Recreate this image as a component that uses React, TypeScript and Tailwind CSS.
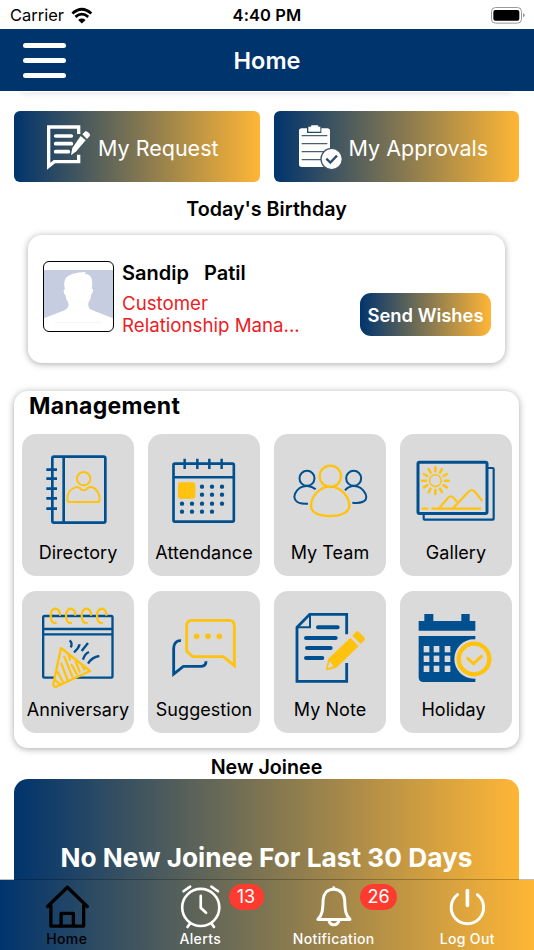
import React from 'react';

const BLUE = '#00508f';
const YELLOW = '#ffc20e';

function DirectoryIcon() {
    return (
        <svg viewBox="66 163 336 315" className="w-28 h-[105px]" fill="none" stroke={BLUE} strokeWidth="8">
            <rect x="157" y="231" width="159" height="198" rx="5" />
            <path d="M191 231V429" />
            <path d="M139 270H171M139 297H171M139 327H171M139 356H171M139 387H171" />
            <g stroke={YELLOW} strokeWidth="6">
                <circle cx="251" cy="297" r="20" />
                <path d="M226 323C210 328 201 343 202 360Q202 367 210 367H290Q299 367 299 360C299 343 290 326 275 322Q264 321 259 329Q251 334 243 329Q236 319 226 323Z" />
            </g>
        </svg>
    );
}

function AttendanceIcon() {
    const dots = [
        [606, 321], [636, 321], [666, 321],
        [606, 345], [636, 345], [666, 345],
        [546, 372], [576, 372], [606, 372], [636, 372], [666, 372],
        [546, 396], [576, 396], [606, 396], [636, 396],
    ];
    return (
        <svg viewBox="444 163 336 315" className="w-28 h-[105px]" fill="none" stroke={BLUE} strokeWidth="7.500">
            <rect x="520.500" y="252" width="181" height="174" rx="4" strokeWidth="8" />
            <path d="M520 293H702M554 237V268M592 237V268M628 237V268M665 237V268" />
            <rect x="534" y="308" width="52" height="49" rx="7" fill={YELLOW} stroke="none" />
            {dots.map(([x, y]) => (
                <circle key={`${x}-${y}`} cx={x} cy={y} r="6.500" fill={BLUE} stroke="none" />
            ))}
        </svg>
    );
}

function TeamIcon() {
    return (
        <svg viewBox="21 163 336 315" className="w-28 h-[105px]" fill="none" stroke={BLUE} strokeWidth="6">
            <circle cx="120" cy="296" r="22.500" />
            <path d="M146 329C131 316 111 316 98 325C84 335 79 350 84 359C89 369 105 373 123 372" />
            <circle cx="260" cy="296" r="22.500" />
            <path d="M234 332C247 316 268 316 281 325C296 336 301 352 296 360C290 369 275 371 256 369" />
            <g stroke={YELLOW} strokeWidth="7">
                <circle cx="190" cy="290" r="32" />
                <path d="M189 321C157 321 133 351 132 377C131 400 158 409 190 409C222 409 248 398 247 377C246 350 221 321 189 321Z" />
            </g>
        </svg>
    );
}

function GalleryIcon() {
    const rays = [0, 30, 60, 90, 120, 150, 180, 210, 240, 270, 300, 330];
    return (
        <svg viewBox="401 163 336 315" className="w-28 h-[105px]" fill="none" stroke={BLUE} strokeWidth="6.500">
            <rect x="455" y="247.500" width="207" height="154" rx="5" strokeWidth="9" />
            <path d="M664 265H679Q682 265 682 268V417Q682 420 679 420H475Q472 420 472 417V403" />
            <g stroke={YELLOW}>
                <circle cx="507" cy="303" r="17.500" strokeWidth="4.500" />
                {rays.map((a) => (
                    <path key={a} d="M507 275V263" transform={`rotate(${a} 507 303)`} strokeWidth="7.500" strokeLinecap="round" />
                ))}
                <path d="M466 387H486M495 387H645M518 386L542 358Q553 342 564 357L572 366M560 386L605 338Q617 324 627 338L648 364" />
            </g>
        </svg>
    );
}

function AnniversaryIcon() {
    return (
        <svg viewBox="66 33 336 315" className="w-28 h-[105px]" fill="none" stroke={BLUE} strokeWidth="7">
            <rect x="129.500" y="108" width="208" height="185" rx="4" />
            <path d="M129 147H338M129 163H338" />
            <path d="M209 181Q219 190 212 202M239 193Q236 205 222 217M264 189L245 213M267 216Q254 221 249 239M298 228Q276 231 264 251" />
            <g stroke={YELLOW} strokeLinecap="round">
                {[152, 198, 245, 291].map((x) => (
                    <path key={x} d={`M${x + 28} 104C${x + 28} 80 ${x} 80 ${x} 106C${x} 122 ${x + 6} 130 ${x + 15} 129`} />
                ))}
                <path d="M183 204L160 312Q160 323 169 320L270 273L183 204Z" fill="#dadada" strokeLinejoin="round" />
                <path d="M206 226L210 239M193 230L217 290M227 245L239 275M184 251L202 298M215 255L231 283M173 276L188 304M164 299L178 311M245 253L253 269" />
            </g>
        </svg>
    );
}

function SuggestionIcon() {
    return (
        <svg viewBox="444 33 336 315" className="w-28 h-[105px]" fill="none" stroke={BLUE} strokeWidth="8.500">
            <path d="M543 182C530 181 521 190 521 204V282L550 259H604Q618 259 618 244" />
            <g stroke={YELLOW}>
                <path d="M576 121H687Q703 121 703 138V257L670 230H578L560 213V138Q560 121 576 121Z" />
                <g fill={YELLOW} stroke="none">
                    <circle cx="590" cy="169" r="8.500" />
                    <circle cx="624" cy="169" r="8.500" />
                    <circle cx="658" cy="169" r="8.500" />
                </g>
            </g>
        </svg>
    );
}

function NoteIcon() {
    return (
        <svg viewBox="21 33 336 315" className="w-28 h-[105px]" fill="none" stroke={BLUE} strokeWidth="8.500">
            <path d="M239 163V103H128L90 142V304H239V249" />
            <path d="M129 103V142H90" strokeWidth="6" />
            <path d="M153 142H212M117 174H206M120 204H191M117 234H166" strokeWidth="12" strokeLinecap="round" />
            <g fill={YELLOW} stroke="none">
                <path d="M250 173L275 199L208 263L180 271Q177 271 177 267L184 236Z" />
                <path d="M256 167L267 155Q271 151 275 155L293 173Q296 177 292 181L281 192Z" />
                <path d="M188 243L199 259L182 265Z" fill="#dadada" />
            </g>
        </svg>
    );
}

function HolidayIcon() {
    return (
        <svg viewBox="401 33 336 315" className="w-28 h-[105px]" fill="none">
            <path d="M457 123H474V102H501V123H585V102H610V123H627V152H457ZM457 168H627V306H471Q457 306 457 292Z" fill={BLUE} />
            {[198, 227, 257].map((y) =>
                [472, 502, 535].map((x) => <rect key={`${x}-${y}`} x={x} y={y} width="17" height="19" fill="#dadada" />)
            )}
            <circle cx="623" cy="237" r="59" fill="#dadada" />
            <circle cx="623" cy="237" r="46" stroke={YELLOW} strokeWidth="13" />
            <path d="M604 235L622 251L645 229" stroke={YELLOW} strokeWidth="9" strokeLinecap="round" />
        </svg>
    );
}

const tiles = [
    { label: 'Directory', icon: <DirectoryIcon /> },
    { label: 'Attendance', icon: <AttendanceIcon /> },
    { label: 'My Team', icon: <TeamIcon /> },
    { label: 'Gallery', icon: <GalleryIcon /> },
    { label: 'Anniversary', icon: <AnniversaryIcon /> },
    { label: 'Suggestion', icon: <SuggestionIcon /> },
    { label: 'My Note', icon: <NoteIcon /> },
    { label: 'Holiday', icon: <HolidayIcon />, shift: 'pr-[5px]' },
];

const tabs = [
    {
        label: 'Home',
        color: 'text-black',
        icon: (
            <svg viewBox="0 330 400 160" className="w-full h-[53px]" fill="none" stroke="currentColor" strokeWidth="10">
                <path d="M142 410L202 352L262 410" strokeLinecap="round" strokeLinejoin="round" />
                <path d="M152 404V469H251V404M183 469V431H220V469" strokeLinejoin="round" />
            </svg>
        ),
    },
    {
        label: 'Alerts',
        color: 'text-white',
        badge: '13',
        badgeClass: 'left-[95px] w-[35px]',
        icon: (
            <svg viewBox="400 330 400 160" className="w-full h-[53px]" fill="none" stroke="currentColor" strokeWidth="8" strokeLinecap="round">
                <circle cx="600" cy="413" r="56" />
                <path d="M600 378V414L616 429M548 364L568 350M652 364L632 350M568 461L560 472M632 461L640 472" />
            </svg>
        ),
    },
    {
        label: 'Notification',
        color: 'text-white',
        badge: '26',
        badgeClass: 'left-[93px] w-[37px]',
        icon: (
            <svg viewBox="0 330 400 160" className="w-full h-[53px]" fill="none" stroke="currentColor" strokeWidth="9" strokeLinejoin="round">
                <path d="M200 358C180 358 169 372 168 390C167 422 165 437 152 449H249C236 437 234 422 233 390C232 372 220 358 200 358Z" />
                <path d="M200 356V353M185 451Q188 465 200 465Q213 465 216 451" strokeLinecap="round" />
            </svg>
        ),
    },
    {
        label: 'Log Out',
        color: 'text-white',
        icon: (
            <svg viewBox="401 330 400 160" className="w-full h-[53px]" fill="none" stroke="currentColor" strokeWidth="9" strokeLinecap="round">
                <path d="M570 374A49 49 0 1 0 630 374" />
                <path d="M600 362V407" strokeWidth="11" />
            </svg>
        ),
    },
];

export default function App() {
    return (
        <main className="w-[534px] h-[950px] overflow-hidden flex flex-col bg-white text-black font-['Inter','Liberation_Sans',sans-serif]">
            {/* Status bar */}
            <div className="h-[29px] shrink-0 grid grid-cols-3 items-center">
                <div className="flex items-center pl-[10px] pt-px gap-[7px] text-[16.500px] leading-none">
                    <span>Carrier</span>
                    <svg viewBox="213 18 65 50" className="w-[22px] h-[17px]" fill="none" stroke="black" strokeWidth="8">
                        <path d="M217 37Q245 12 273 37" />
                        <path d="M226 47Q245 31 264 47" />
                        <path d="M234 56Q245 48 256 56L245 67Z" fill="black" stroke="none" />
                    </svg>
                </div>
                <span className="pt-px text-center text-[16.500px] leading-none font-semibold tracking-[0.1px]">4:40 PM</span>
                <div className="flex justify-end pr-2">
                    <svg viewBox="672 15 108 54" className="w-9 h-[18px]">
                        <rect x="676.500" y="19.500" width="90" height="47" rx="12" fill="white" stroke="#999" strokeWidth="3" />
                        <rect x="682" y="27" width="78" height="32" rx="6" />
                        <path d="M771 36Q776 38 776 43Q776 47 771 49Z" fill="#999" />
                    </svg>
                </div>
            </div>

            {/* Header */}
            <header className="h-[62px] shrink-0 relative z-10 grid grid-cols-3 items-center bg-[#00346d]">
                <div className="flex flex-col gap-[10px] pl-[23px]">
                    <span className="w-[43px] h-[5px] rounded-full bg-white"></span>
                    <span className="w-[43px] h-[5px] rounded-full bg-white"></span>
                    <span className="w-[43px] h-[5px] rounded-full bg-white"></span>
                </div>
                <h1 className="pt-0.5 text-center text-white text-[23.500px] font-semibold">Home</h1>
            </header>

            {/* Content */}
            <div className="h-[789px] shrink-0 overflow-hidden pl-[14px] pr-[15px]">
                <div className="h-px mx-2 shadow-[0_1px_5px_rgba(0,0,0,0.35)]"></div>
                <div className="mt-[19px] grid grid-cols-2 gap-3.5">
                    <button className="h-[71px] rounded-md flex items-center pl-8 bg-linear-to-r/srgb from-[#00346d] to-[#ffb636] text-white">
                        <svg viewBox="138 65 138 150" className="w-[46px] h-[50px]" fill="none" stroke="white" strokeWidth="10">
                            <path d="M236 101V80H146V198L163 184H236V163" />
                            <path d="M167 107H214M167 130H214M167 154H205" strokeWidth="11" strokeLinecap="round" />
                            <path d="M242 107L257 120L229 153L213 165L217 143Z" fill="white" stroke="none" />
                            <path d="M247 102L256 93Q261 92 269 100Q271 104 269 107L261 116Z" fill="white" stroke="none" />
                        </svg>
                        <span className="ml-[6px] pt-0.5 text-[21.500px] leading-7">My Request</span>
                    </button>
                    <button className="h-[71px] rounded-md flex items-center pl-[23px] bg-linear-to-r/srgb from-[#00346d] to-[#ffb636] text-white">
                        <svg viewBox="90 65 138 150" className="w-[46px] h-[50px]" fill="white">
                            <path d="M104 84H120V98H163V84H181Q189 84 189 92V200H104Q96 200 96 192V92Q96 84 104 84Z" />
                            <path d="M124 79H132V77Q132 75 135 75H151Q154 75 154 78V79H160V94H124Z" />
                            <path d="M104 106H181M104 130H181M104 154H181M104 178H163" stroke="#486070" strokeWidth="4" />
                            <circle cx="194" cy="176" r="34" fill="#46596a" />
                            <circle cx="194" cy="176" r="30" />
                            <path d="M178 175L190 187L210 166" fill="none" stroke="#304f6b" strokeWidth="7" />
                        </svg>
                        <span className="ml-[6px] pt-0.5 text-[21.500px] leading-7">My Approvals</span>
                    </button>
                </div>

                {/* Birthday */}
                <h2 className="mt-[15px] h-6 text-center text-[19.700px] leading-6 font-semibold">Today's Birthday</h2>
                <section className="mt-[14px] mx-[14px] h-32 rounded-[14px] bg-white shadow-[0_1px_7px_rgba(0,0,0,0.35)] flex pl-[15px] pr-[14px]">
                    <div className="mt-[26px] w-[71px] h-[71px] shrink-0 rounded-md border border-black overflow-hidden">
                        <svg viewBox="73 110 207 207" className="w-full h-full">
                            <path d="M73 134H280V279L222 256Q202 249 206 232Q214 222 215 207Q222 199 220 190L216 192Q222 158 208 149Q200 145 194 147L199 140Q152 142 139 157Q130 171 136 192Q130 191 133 202Q134 209 138 210Q138 224 146 232Q151 248 131 256L73 279Z" fill="#c7cde1" />
                            <path d="M105 292H247" stroke="#eee" strokeWidth="2" />
                        </svg>
                    </div>
                    <div className="ml-2 mt-[26px] w-[200px]">
                        <h3 className="text-xl leading-6 font-semibold whitespace-pre">Sandip   Patil</h3>
                        <p className="mt-2 text-[18.700px] leading-[22px] text-[#ed1c24]">
                            Customer
                            <br />
                            Relationship Mana...
                        </p>
                    </div>
                    <button className="ml-auto mt-[58px] w-[131px] h-[43px] rounded-[11px] bg-linear-to-r/srgb from-[#00346d] to-[#ffb636] pt-0.5 text-white text-[18.400px] font-semibold whitespace-nowrap">
                        Send Wishes
                    </button>
                </section>

                {/* Management */}
                <section className="mt-[28px] h-[357px] rounded-[14px] bg-white shadow-[0_1px_7px_rgba(0,0,0,0.35)] pl-2 pr-[7px]">
                    <h2 className="pl-[7px] h-[43px] leading-[30px] text-[23px] font-bold tracking-[0.3px]">Management</h2>
                    <div className="grid grid-cols-4 gap-x-[14px] gap-y-[15px]">
                        {tiles.map((tile) => (
                            <div key={tile.label} className="h-[142px] rounded-[14px] bg-[#dadada] flex flex-col items-center">
                                {tile.icon}
                                <span className={`text-[18px] leading-7 tracking-[0.050px] whitespace-nowrap ${tile.shift ?? ''}`}>{tile.label}</span>
                            </div>
                        ))}
                    </div>
                </section>

                {/* New joinee */}
                <h2 className="mt-[7px] h-6 text-center text-[19.700px] leading-6 font-semibold">New Joinee</h2>
                <section className="h-[156px] pt-0.5 rounded-[14px] flex items-center justify-center bg-linear-to-r/srgb from-[#00346d] to-[#ffb636] text-white text-[26.250px] font-bold whitespace-nowrap">
                    No New Joinee For Last 30 Days
                </section>
            </div>

            {/* Tab bar */}
            <nav className="h-[70px] shrink-0 grid grid-cols-4 bg-linear-to-r/srgb from-[#00346d] to-[#ffb636] shadow-[0_-1px_0_rgba(0,0,0,0.25)]">
                {tabs.map((tab) => (
                    <div key={tab.label} className={`relative flex flex-col items-center ${tab.color}`}>
                        {tab.icon}
                        <span className="text-[14px] leading-3 font-medium tracking-[0.350px]">{tab.label}</span>
                        {tab.badge && (
                            <span className={`absolute top-1 h-[26px] rounded-full bg-[#ff3b30] text-center text-[18px] leading-[26px] text-white ${tab.badgeClass}`}>
                                {tab.badge}
                            </span>
                        )}
                    </div>
                ))}
            </nav>
        </main>
    );
}
